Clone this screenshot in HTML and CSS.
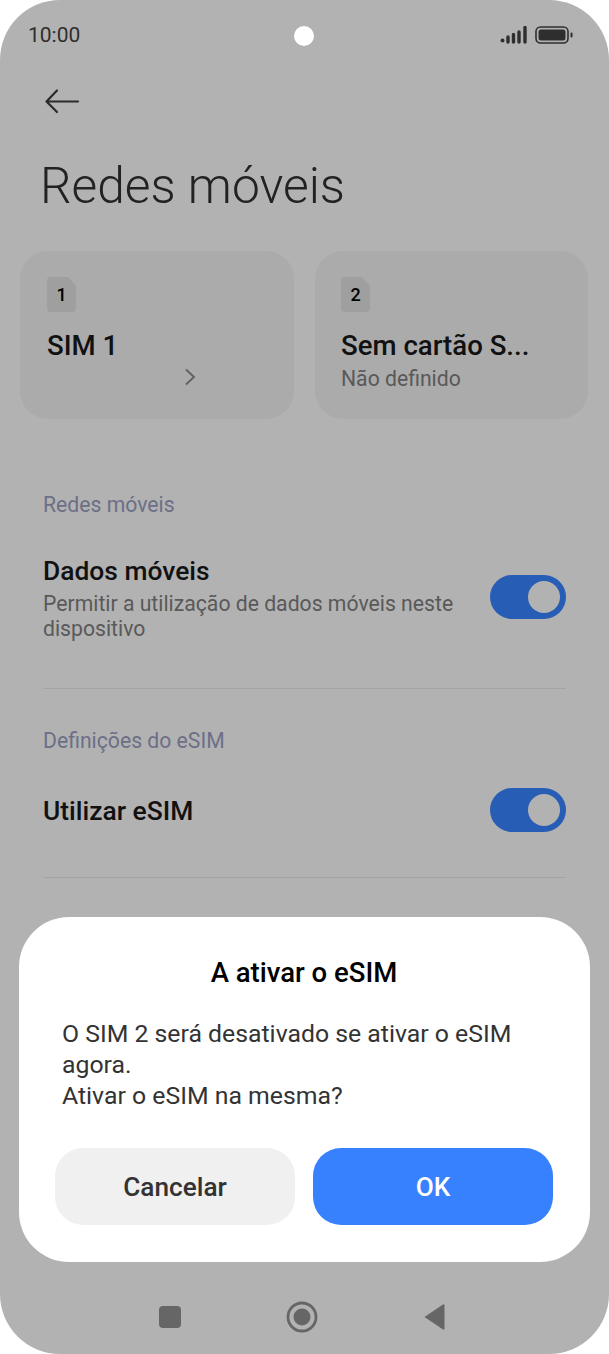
FILE: index.html
```html
<!DOCTYPE html>
<html lang="pt">
<head>
    <meta charset="UTF-8">
    <meta name="viewport" content="width=device-width, initial-scale=1.0">
    <title>Redes móveis</title>
    <link rel="stylesheet" href="styles.css">
</head>
<body>
    <div class="phone">
        <header class="status-bar">
            <span class="time">10:00</span>
            <span class="camera"></span>
            <span class="status-icons">
                <svg width="28" height="18" viewBox="0 0 28 18">
                    <circle cx="2.5" cy="14.5" r="2" fill="#2e2e2e"/>
                    <path d="M8 11v5M13.5 8.500v7.500M19 6v10M25 1.500v14.500" stroke="#2e2e2e" stroke-width="3.400" stroke-linecap="round" fill="none"/>
                </svg>
                <svg width="39" height="18" viewBox="0 0 39 18">
                    <rect x="1" y="1" width="32" height="16" rx="4.500" fill="none" stroke="#2e2e2e" stroke-width="1.600"/>
                    <rect x="3.500" y="3.500" width="27" height="11" rx="2.500" fill="#2e2e2e"/>
                    <rect x="35.500" y="6.500" width="2" height="5" rx="1" fill="#2e2e2e"/>
                </svg>
            </span>
        </header>

        <a class="back" href="#">
            <svg width="36" height="26" viewBox="0 0 36 26">
                <path d="M34 13.500H3M13 2.500L2.500 13.500L13 24" fill="none" stroke="#2b2b2b" stroke-width="2.200" stroke-linecap="round" stroke-linejoin="round"/>
            </svg>
        </a>

        <h1 class="title">Redes móveis</h1>

        <section class="sim-cards">
            <div class="sim-card">
                <span class="sim-icon">1</span>
                <div class="sim-name">SIM 1</div>
                <div class="sim-arrow">
                    <svg width="12" height="18" viewBox="0 0 12 18">
                        <path d="M2 1.500L10 9L2 16.500" fill="none" stroke="#5f5f5f" stroke-width="1.800"/>
                    </svg>
                </div>
            </div>
            <div class="sim-card">
                <span class="sim-icon">2</span>
                <div class="sim-name">Sem cartão S...</div>
                <div class="sim-status">Não definido</div>
            </div>
        </section>

        <section class="settings">
            <h2 class="group-title">Redes móveis</h2>
            <div class="row row-data">
                <div class="row-text">
                    <div class="row-name">Dados móveis</div>
                    <p class="row-desc">Permitir a utilização de dados móveis neste dispositivo</p>
                </div>
                <span class="switch"></span>
            </div>
            <hr class="divider">
            <h2 class="group-title">Definições do eSIM</h2>
            <div class="row row-esim">
                <div class="row-name">Utilizar eSIM</div>
                <span class="switch"></span>
            </div>
            <hr class="divider">
        </section>

        <section class="dialog">
            <h3 class="dialog-title">A ativar o eSIM</h3>
            <p class="dialog-text">O SIM 2 será desativado se ativar o eSIM agora.<br>Ativar o eSIM na mesma?</p>
            <div class="dialog-buttons">
                <button type="button" class="btn btn-cancel">Cancelar</button>
                <button type="button" class="btn btn-ok">OK</button>
            </div>
        </section>

        <nav class="nav-bar">
            <svg class="nav-square" width="24" height="24" viewBox="0 0 24 24">
                <rect x="1" y="1" width="22" height="22" rx="4" fill="#666"/>
            </svg>
            <svg class="nav-home" width="32" height="32" viewBox="0 0 32 32">
                <circle cx="16" cy="16" r="14" fill="none" stroke="#666" stroke-width="2.800"/>
                <circle cx="16" cy="16" r="8.500" fill="#666"/>
            </svg>
            <svg class="nav-back" width="24" height="28" viewBox="0 0 24 28">
                <path d="M2.500 14L21 1.500a1 1 0 0 1 1.500 1V25.500a1 1 0 0 1-1.500 1Z" fill="#666"/>
            </svg>
        </nav>
    </div>
</body>
</html>
```

FILE: styles.css
```css
:root {
    --screen-color: #b2b2b2;
    --card-color: #ababab;
    --text-color: #111;
    --muted-color: #595959;
    --group-color: #6c6f87;
    --switch-color: #285db5;
    --line-color: #a4a4a4;
}

* {
    box-sizing: border-box;
}

html, body {
    margin: 0;
    padding: 0;
    background-color: #fff;
}

body {
    font-family: "Roboto", "Liberation Sans", sans-serif;
    color: var(--text-color);
}

.phone {
    position: relative;
    width: 609px;
    height: 1354px;
    overflow: hidden;
    background-color: var(--screen-color);
    border-radius: 60px;
}

.status-bar {
    display: flex;
    justify-content: space-between;
    align-items: center;
    height: 24px;
    padding: 0 35px 0 28px;
    position: relative;
    top: 23px;
}

.time {
    font-size: 21px;
    color: #2e2e2e;
}

.camera {
    position: absolute;
    left: 294px;
    top: 3px;
    width: 20px;
    height: 20px;
    border-radius: 50%;
    background-color: #fff;
}

.status-icons {
    display: flex;
    align-items: center;
    gap: 7px;
}

.status-icons svg {
    display: block;
}

.back {
    display: block;
    width: 36px;
    height: 26px;
    margin: 64px 0 0 44px;
}

.back svg {
    display: block;
}

.title {
    margin: 42px 0 0 40px;
    font-size: 49.7px;
    line-height: 60px;
    font-weight: 300;
    color: #222;
}

.sim-cards {
    display: grid;
    grid-template-columns: 274px 273px;
    gap: 21px;
    margin: 35px 21px 0 20px;
}

.sim-card {
    height: 168px;
    padding: 26px 0 0 27px;
    background-color: var(--card-color);
    border-radius: 28px;
}

.sim-card + .sim-card {
    padding-left: 26px;
}

.sim-icon {
    display: block;
    width: 29px;
    height: 35px;
    font-size: 18px;
    font-weight: 500;
    line-height: 35px;
    text-align: center;
    color: #000;
    background-color: #9f9f9f;
    border-radius: 4px;
    clip-path: polygon(0 0, 72% 0, 100% 24%, 100% 100%, 0 100%);
}

.sim-name {
    margin-top: 16px;
    font-size: 27.6px;
    line-height: 36px;
    font-weight: 500;
}

.sim-status {
    margin-top: 2px;
    font-size: 21.2px;
    line-height: 26px;
    color: var(--muted-color);
}

.sim-arrow {
    margin: 4px 0 0 137px;
}

.sim-arrow svg {
    display: block;
}

.settings {
    padding: 0 43px;
}

.group-title {
    margin: 0;
    font-size: 21.2px;
    line-height: 26px;
    font-weight: 400;
    color: var(--group-color);
}

.settings > .group-title:first-child {
    margin-top: 73px;
}

.row {
    display: flex;
    justify-content: space-between;
    align-items: center;
}

.row-data {
    margin-top: 35px;
    align-items: flex-start;
}

.row-data .switch {
    margin-top: 22px;
}

.row-esim {
    margin-top: 36px;
}

.row-esim .switch {
    margin-top: -2px;
}

.row-text {
    width: 430px;
}

.row-name {
    font-size: 26.4px;
    line-height: 36px;
    font-weight: 500;
}

.row-desc {
    margin: 2px 0 0;
    font-size: 21.2px;
    line-height: 25px;
    color: var(--muted-color);
}

.switch {
    position: relative;
    flex: none;
    width: 76px;
    height: 44px;
    background-color: var(--switch-color);
    border-radius: 22px;
}

.switch::after {
    content: "";
    position: absolute;
    top: 6px;
    right: 6px;
    width: 32px;
    height: 32px;
    border-radius: 50%;
    background-color: var(--screen-color);
}

.divider {
    height: 1px;
    margin: 47px 0 39px;
    border: none;
    background-color: var(--line-color);
}

.row-esim + .divider {
    margin-top: 45px;
}

.dialog {
    position: absolute;
    left: 19px;
    top: 917px;
    width: 571px;
    height: 345px;
    padding: 38px 37px 0 36px;
    background-color: #fff;
    border-radius: 50px;
}

.dialog-title {
    margin: 0;
    font-size: 27.5px;
    line-height: 36px;
    font-weight: 500;
    text-align: center;
    color: #000;
}

.dialog-text {
    margin: 27px 0 0;
    padding: 0 7px;
    font-size: 24.8px;
    line-height: 31px;
    color: #333;
}

.dialog-buttons {
    display: flex;
    gap: 18px;
    margin-top: 37px;
}

.btn {
    flex: 1;
    height: 77px;
    border: none;
    border-radius: 28px;
    font-family: "Roboto", "Liberation Sans", sans-serif;
    font-size: 26.2px;
    font-weight: 500;
}

.btn-cancel {
    background-color: #f0f0f0;
    color: #333;
}

.btn-ok {
    background-color: #3781ff;
    color: #fff;
}

.nav-bar {
    position: absolute;
    left: 0;
    right: 0;
    bottom: 21px;
    height: 32px;
    display: flex;
    align-items: center;
    padding-left: 158px;
}

.nav-home {
    margin-left: 104px;
}

.nav-back {
    margin-left: 104px;
}
```
